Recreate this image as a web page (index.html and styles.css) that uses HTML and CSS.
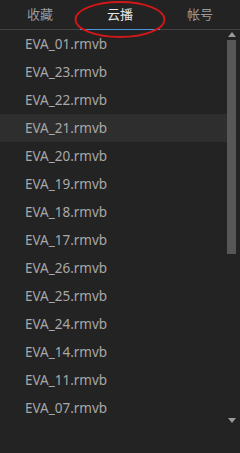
FILE: index.html
```html
<!DOCTYPE html>
<html>
<head>
<meta charset="utf-8">
<link rel="stylesheet" href="styles.css">
</head>
<body>
<div class="app">
  <div class="tabs">
    <div class="tab">收藏</div>
    <div class="tab active">云播</div>
    <div class="tab">帐号</div>
    <svg class="circle" width="100" height="40" viewBox="0 0 100 40"><ellipse cx="46" cy="19.5" rx="44.5" ry="17.5" fill="none" stroke="#d01818" stroke-width="2"/></svg>
  </div>
  <div class="body">
    <ul class="list">
      <li>EVA_01.rmvb</li>
      <li>EVA_23.rmvb</li>
      <li>EVA_22.rmvb</li>
      <li class="hover">EVA_21.rmvb</li>
      <li>EVA_20.rmvb</li>
      <li>EVA_19.rmvb</li>
      <li>EVA_18.rmvb</li>
      <li>EVA_17.rmvb</li>
      <li>EVA_26.rmvb</li>
      <li>EVA_25.rmvb</li>
      <li>EVA_24.rmvb</li>
      <li>EVA_14.rmvb</li>
      <li>EVA_11.rmvb</li>
      <li>EVA_07.rmvb</li>
    </ul>
    <div class="scroll">
      <div class="arrow up"></div>
      <div class="thumb"></div>
      <div class="track"></div>
      <div class="arrow down"></div>
    </div>
  </div>
</div>
</body>
</html>
```
FILE: styles.css
```css
* { box-sizing: border-box; }
html, body { margin: 0; padding: 0; background: #232323; }
.app {
  width: 240px; height: 453px;
  background: #232323;
  font-family: "Noto Sans", "Noto Sans CJK SC", sans-serif;
  display: flex; flex-direction: column;
}
.tabs {
  position: relative;
  height: 30px;
  display: flex;
  border-bottom: 1px solid #434343;
}
.tab {
  flex: 1;
  text-align: center;
  font-size: 13px;
  line-height: 29px;
  color: #9a9a9a;
}
.tab.active {
  color: #e6e6e6;
  border-bottom: 1px solid #4d94e0;
  margin-bottom: -1px;
}
.circle { position: absolute; left: 74px; top: 0; }
.body { flex: 1; display: flex; }
.list { list-style: none; margin: 0; padding: 0; flex: 1; }
.list li {
  height: 28px; line-height: 28px;
  padding-left: 25px;
  font-size: 13.5px;
  color: #a8a8a8;
}
.list li.hover { background: #2e2e2e; }
.scroll {
  width: 13px;
  display: flex; flex-direction: column; align-items: flex-start;
  padding-top: 2px;
}
.arrow {
  width: 0; height: 0;
  border-left: 4px solid transparent;
  border-right: 4px solid transparent;
  margin-left: 0.5px;
}
.arrow.up { border-bottom: 5px solid #9a9a9a; }
.arrow.down { border-top: 5px solid #9a9a9a; }
.thumb { width: 9px; height: 214px; background: #575757; margin-top: 3px; margin-left: -0.5px; }
.track { flex: 0 0 164px; }
```
